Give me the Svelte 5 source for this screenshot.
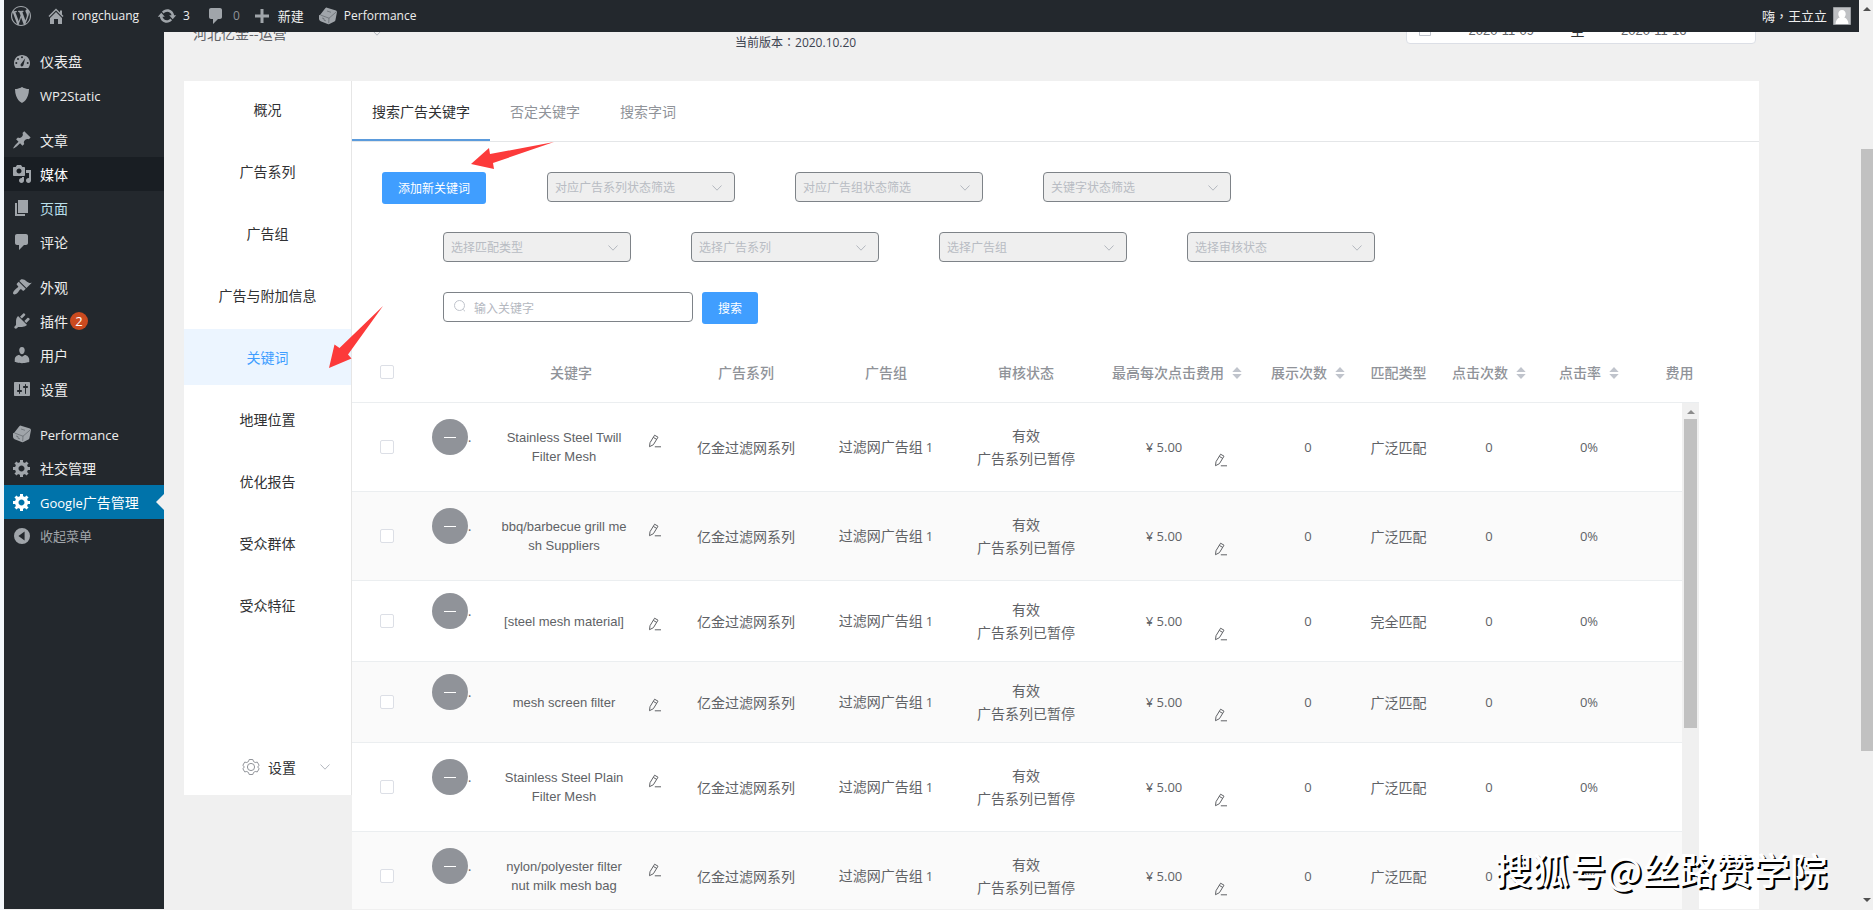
<script>
  const paths = {
    wordpress: 'M20 10c0-5.51-4.49-10-10-10C4.48 0 0 4.49 0 10c0 5.52 4.48 10 10 10 5.51 0 10-4.48 10-10zM7.78 15.37L4.37 6.22c.55-.02 1.17-.08 1.17-.08.5-.06.44-1.13-.06-1.11 0 0-1.45.11-2.37.11-.18 0-.37 0-.58-.01C4.12 2.69 6.87 1.11 10 1.11c2.33 0 4.45.87 6.05 2.34-.68-.11-1.65.39-1.65 1.58 0 .74.45 1.36.9 2.1.35.61.55 1.36.55 2.46 0 1.49-1.4 5-1.4 5l-3.03-8.37c.54-.02.82-.17.82-.17.5-.05.44-1.25-.06-1.22 0 0-1.44.12-2.38.12-.87 0-2.33-.12-2.33-.12-.5-.03-.56 1.2-.06 1.22l.92.08 1.26 3.41zM17.41 10c.24-.64.74-1.87.43-4.25.7 1.29 1.05 2.71 1.05 4.25 0 3.29-1.73 6.24-4.4 7.78.97-2.59 1.94-5.2 2.92-7.78zM6.1 18.09C3.12 16.65 1.11 13.53 1.11 10c0-1.3.23-2.48.72-3.59C3.25 10.3 4.67 14.2 6.1 18.09zm4.03-6.63l2.58 6.98c-.86.29-1.76.45-2.71.45-.79 0-1.57-.11-2.29-.33.81-2.38 1.62-4.74 2.42-7.1z',
    home: 'M16 8.5l1.53 1.53-1.06 1.06L10 4.6l-6.47 6.49-1.06-1.06L10 2.5l4 4v-2h2v4zm-6-2.46l6 5.99V18h-4v-5H8v5H4v-5.97z',
    update: 'M10.2 3.28c3.53 0 6.43 2.61 6.92 6h2.08l-3.5 4-3.5-4h2.32c-.45-1.97-2.21-3.45-4.32-3.45-1.45 0-2.73.71-3.54 1.78L4.95 5.66C6.23 4.2 8.11 3.28 10.2 3.28zm-.4 13.44c-3.52 0-6.43-2.61-6.92-6H.8l3.5-4c1.17 1.33 2.33 2.67 3.5 4H5.48c.45 1.97 2.21 3.45 4.32 3.45 1.45 0 2.73-.71 3.54-1.78l1.71 1.95c-1.28 1.46-3.15 2.38-5.25 2.38z',
    plus: 'M17 8.5v3h-5.500v5.500h-3v-5.500H3v-3h5.500V3h3v5.500z',
    cube: 'M2 9l5.500-7q.5-.6 1.500-.3l9 2.800q1.200.5 1 1.500l-1.600 8.200q-.2.8-1 1.200l-5 2.500q-.9.400-1.800.1l-7-2.800q-1.500-.7-1.600-2.200v-3q0-.5.300-1z',
    dashboard: 'M3.76 17h12.480c1.100-1.370 1.760-3.110 1.760-5 0-4.420-3.580-8-8-8s-8 3.580-8 8c0 1.890.66 3.630 1.760 5zM9 6.200a1 1 0 1 0 2 0a1 1 0 1 0-2 0zM5 8a1 1 0 1 0 2 0a1 1 0 1 0-2 0zM3.300 12a1 1 0 1 0 2 0a1 1 0 1 0-2 0zM14.700 12a1 1 0 1 0 2 0a1 1 0 1 0-2 0zM13.200 7.300l-1.700 6.700c-.3 1-.9 1.500-1.700 1.400-1.100-.2-1.600-1.300-1.100-2.200z',
    shield: 'M10 2s3 2 7 2c0 11-7 14-7 14S3 15 3 4c4 0 7-2 7-2z',
    pin: 'M10.44 3.02l1.82-1.82 6.36 6.35-1.83 1.82c-1.05-.68-2.48-.57-3.41.36l-.75.75c-.92.93-1.04 2.35-.35 3.41l-1.83 1.82-2.41-2.41-2.8 2.79c-.42.42-3.38 2.71-3.8 2.29s1.86-3.39 2.28-3.81l2.79-2.79L4.1 9.36l1.83-1.82c1.05.69 2.48.57 3.4-.36l.75-.75c.93-.92 1.05-2.35.36-3.41z',
    media: 'M13 11V4c0-.55-.45-1-1-1h-1.67L9 1H5L3.67 3H2c-.55 0-1 .45-1 1v7c0 .55.45 1 1 1h10c.55 0 1-.45 1-1zM7 4.5c1.38 0 2.5 1.12 2.5 2.5S8.38 9.5 7 9.5 4.5 8.38 4.5 7 5.62 4.5 7 4.5zM14 6h5v10.5c0 1.38-1.12 2.5-2.5 2.5S14 17.88 14 16.5s1.12-2.5 2.5-2.5c.17 0 .34.02.5.05V9h-3V6zm-4 8.05V13h2v3.5c0 1.38-1.12 2.5-2.5 2.5S7 17.88 7 16.5 8.12 14 9.5 14c.17 0 .34.02.5.05z',
    page: 'M6 15V2h10v13H6zm-1 1h8v2H3V5h2v11z',
    comment: 'M5 2h9c1.1 0 2 .9 2 2v7c0 1.1-.9 2-2 2h-2l-5 5v-5H5c-1.1 0-2-.9-2-2V4c0-1.1.9-2 2-2z',
    brush: 'M14.48 11.06L7.41 3.99l1.5-1.5c.5-.56 2.3-.47 3.51.32 1.21.8 1.43 1.28 2.91 2.1 1.18.64 2.45 1.26 4.45.85zm-.71.71L6.7 4.7 4.93 6.47c-.39.39-.39 1.02 0 1.41l1.06 1.06c.39.39.39 1.03 0 1.42-.6.6-1.43 1.11-2.21 1.69-.35.26-.7.53-1.01.84C1.43 14.23.4 16.08 1.4 17.07c.99 1 2.84-.03 4.18-1.36.31-.31.58-.66.85-1.02.57-.78 1.08-1.61 1.69-2.21.39-.39 1.02-.39 1.41 0l1.06 1.06c.39.39 1.02.39 1.41 0z',
    plugin: 'M13.11 4.36L9.87 7.6 8 5.73l3.24-3.24c.35-.34 1.05-.2 1.56.32.52.51.66 1.21.31 1.55zm-8 1.77l.91-1.12 9.01 9.01-1.19.84c-.71.71-2.63 1.16-3.82 1.16H6.14L4.9 17.26c-.59.59-1.54.59-2.12 0-.59-.58-.59-1.53 0-2.12l1.24-1.24v-3.88c0-1.13.4-3.19 1.09-3.89zm7.26 3.97l3.24-3.24c.34-.35 1.04-.21 1.55.31.52.51.66 1.21.31 1.55l-3.24 3.25z',
    user: 'M10 9.25c-2.27 0-2.73-3.44-2.73-3.44C7 4.02 7.82 2 9.97 2c2.16 0 2.98 2.02 2.71 3.81 0 0-.41 3.44-2.68 3.44zm0 2.57L12.72 10c2.39 0 4.52 2.33 4.52 4.53v2.49s-3.65 1.13-7.24 1.13c-3.65 0-7.24-1.13-7.24-1.13v-2.49c0-2.25 1.94-4.48 4.47-4.48z',
    sliders: 'M18 16V4c0-.55-.45-1-1-1H3c-.55 0-1 .45-1 1v12c0 .55.45 1 1 1h14c.55 0 1-.45 1-1zM8 11h1c.55 0 1 .45 1 1s-.45 1-1 1H8v1.500c0 .28-.22.5-.5.5s-.5-.22-.5-.5V13H6c-.55 0-1-.45-1-1s.45-1 1-1h1V5.500c0-.28.22-.5.5-.5s.5.22.5.5V11zm5-2h-1c-.55 0-1-.45-1-1s.45-1 1-1h1V5.500c0-.28.22-.5.5-.5s.5.22.5.5V7h1c.55 0 1 .45 1 1s-.45 1-1 1h-1v5.500c0 .28-.22.5-.5.5s-.5-.22-.5-.5V9z',
    gear: 'M18 12h-2.18c-.17.7-.44 1.35-.81 1.93l1.54 1.54-2.1 2.1-1.54-1.54c-.58.36-1.23.63-1.91.79V19H8v-2.18c-.68-.16-1.33-.43-1.91-.79l-1.54 1.54-2.12-2.12 1.54-1.54c-.36-.58-.63-1.23-.79-1.91H1V9.03h2.17c.16-.7.44-1.35.8-1.94L2.43 5.55l2.1-2.1 1.54 1.54c.58-.37 1.24-.64 1.93-.81V2h3v2.18c.68.16 1.33.43 1.91.79l1.54-1.54 2.12 2.12-1.54 1.54c.36.59.64 1.24.8 1.94H18V12zm-8.5 1.5c1.66 0 3-1.34 3-3s-1.34-3-3-3-3 1.34-3 3 1.34 3 3 3z',
    collapse: 'M10 2a8 8 0 1 0 0 16a8 8 0 1 0 0-16zM12.600 5.600v8.800L6.400 10z'
  };

  const menu = [
    [
      { icon: 'dashboard', text: '仪表盘' },
      { icon: 'shield', latin: 'WP2Static' }
    ],
    [
      { icon: 'pin', text: '文章' },
      { icon: 'media', text: '媒体', state: 'open' },
      { icon: 'page', text: '页面', state: 'hover' },
      { icon: 'comment', text: '评论' }
    ],
    [
      { icon: 'brush', text: '外观' },
      { icon: 'plugin', text: '插件', badge: 2 },
      { icon: 'user', text: '用户' },
      { icon: 'sliders', text: '设置' }
    ],
    [
      { icon: 'cube', latin: 'Performance' },
      { icon: 'gear', text: '社交管理' },
      { icon: 'gear', latin: 'Google', text: '广告管理', state: 'current' },
      { icon: 'collapse', text: '收起菜单', state: 'muted' }
    ]
  ];

  const sections = ['概况', '广告系列', '广告组', '广告与附加信息', '关键词', '地理位置', '优化报告', '受众群体', '受众特征'];
  const tabs = ['搜索广告关键字', '否定关键字', '搜索字词'];
  const statusFilters = ['对应广告系列状态筛选', '对应广告组状态筛选', '关键字状态筛选'];
  const typeFilters = ['选择匹配类型', '选择广告系列', '选择广告组', '选择审核状态'];

  const rows = [
    { lines: ['Stainless Steel Twill', 'Filter Mesh'], match: '广泛匹配' },
    { lines: ['bbq/barbecue grill me', 'sh Suppliers'], match: '广泛匹配' },
    { lines: ['[steel mesh material]'], match: '完全匹配' },
    { lines: ['mesh screen filter'], match: '广泛匹配' },
    { lines: ['Stainless Steel Plain', 'Filter Mesh'], match: '广泛匹配' },
    { lines: ['nylon/polyester filter', 'nut milk mesh bag'], match: '广泛匹配' }
  ];
</script>

{#snippet icon(name)}
  <svg class="icon" viewBox="0 0 20 20" aria-hidden="true">
    <path fill="currentColor" fill-rule="evenodd" d={paths[name]} />
    {#if name === 'cube'}
      <path d="M2.500 9l8.500 3.200 7.500-6.500M11 12.200l-.3 5M4 12l2 .6v1.600l2 .7M9 5l4 1.300" fill="none" stroke="#23282d" stroke-opacity=".35" stroke-width="1" />
    {/if}
  </svg>
{/snippet}

{#snippet chevron()}
  <svg class="chevron" viewBox="0 0 12 12" aria-hidden="true"><path d="M1.500 3.500L6 8.200l4.500-4.700" fill="none" stroke="currentColor" /></svg>
{/snippet}

{#snippet pencil()}
  <button class="edit" aria-label="编辑">
    <svg viewBox="0 0 14 14" aria-hidden="true">
      <path d="M1.500 12.700L2 8.700 6.600 1.200l3.400 2L5.400 10.700zM5.300 3.400l3.400 2M6.800 12.800h6.200" fill="none" stroke="currentColor" stroke-linejoin="round" />
    </svg>
  </button>
{/snippet}

{#snippet sorter()}
  <svg class="sorter" viewBox="0 0 10 14" aria-hidden="true"><path d="M5 1l4.700 5H.3zM5 13l4.700-5H.3z" fill="#c0c4cc" /></svg>
{/snippet}

{#snippet filter(label)}
  <div class="filter">
    <select disabled aria-label={label}><option>{label}</option></select>
    {@render chevron()}
  </div>
{/snippet}

<div class="page">
  <header class="topbar">
    <a href="#wp" class="wp" aria-label="WordPress">{@render icon('wordpress')}</a>
    <a href="#home" class="home">{@render icon('home')}<span class="latin">rongchuang</span></a>
    <a href="#updates" class="updates">{@render icon('update')}<span class="latin">3</span></a>
    <a href="#comments" class="comments">{@render icon('comment')}<span class="latin dim">0</span></a>
    <a href="#new" class="new">{@render icon('plus')}<span>新建</span></a>
    <a href="#performance">{@render icon('cube')}<span class="latin">Performance</span></a>
    <a href="#profile" class="profile">
      <span>嗨<span class="mark">，</span>王立立</span>
      <svg class="avatar" viewBox="0 0 18 18" aria-hidden="true">
        <path d="M.5.5h17v17H.5z" fill="#bfc1c4" stroke="#9a9da1" />
        <path d="M9 3c2.400 0 3.700 1.700 3.700 4 0 1.500-.7 2.800-1.500 3.600 2.500.8 4 2.800 4.300 6.400h-13c.3-3.600 1.800-5.600 4.300-6.400C6 9.800 5.300 8.500 5.300 7c0-2.300 1.300-4 3.700-4z" fill="#fff" />
      </svg>
    </a>
  </header>

  <div class="body">
    <nav class="menu" aria-label="主菜单">
      {#each menu as group}
        <ul>
          {#each group as item}
            <li>
              <a href="#menu" class={item.state ?? ''}>
                {@render icon(item.icon)}
                <span>{#if item.latin}<span class="latin">{item.latin}</span>{/if}{item.text ?? ''}</span>
                {#if item.badge}<span class="badge latin">{item.badge}</span>{/if}
              </a>
            </li>
          {/each}
        </ul>
      {/each}
    </nav>

    <main>
      <div class="subhead">
        <button class="account"><span>河北亿金--运营</span>{@render chevron()}</button>
        <p>当前版本<span class="mark">：</span><span class="latin">2020.10.20</span></p>
        <div class="dates">
          <svg viewBox="0 0 14 14" aria-hidden="true"><path d="M1.500 2.500h11v10h-11zM1.500 5.500h11M4.500 1v3M9.500 1v3" fill="none" stroke="#c0c4cc" /></svg>
          <input aria-label="开始日期" value="2020-11-09" />
          <span>至</span>
          <input aria-label="结束日期" value="2020-11-16" />
        </div>
      </div>

      <div class="columns">
        <nav class="sections" aria-label="广告管理">
          {#each sections as section}
            <a href="#section" class:active={section === '关键词'}>{section}</a>
          {/each}
          <button class="settings">
            <svg class="cog" viewBox="0 0 18 18" aria-hidden="true">
              <path d="M7.200 1.500h3.600l.7 2 1.700 1 2.100-.4 1.800 3.100-1.400 1.800 1.400 1.800-1.800 3.100-2.100-.4-1.700 1-.7 2H7.200l-.7-2-1.700-1-2.100.4L.9 10.800 2.300 9 .9 7.200l1.800-3.100 2.100.4 1.700-1z" fill="none" stroke="currentColor" stroke-linejoin="round" />
              <circle cx="9" cy="9" r="3.600" fill="none" stroke="currentColor" />
            </svg>
            <span>设置</span>
            {@render chevron()}
          </button>
        </nav>

        <section class="panel">
          <div class="tabs">
            {#each tabs as tab, i}
              <button class:active={i === 0}>{tab}</button>
            {/each}
          </div>

          <div class="filters">
            <div class="line first">
              <button class="primary">添加新关键词</button>
              {#each statusFilters as label}{@render filter(label)}{/each}
            </div>
            <div class="line">
              {#each typeFilters as label}{@render filter(label)}{/each}
            </div>
            <div class="line search">
              <div class="query">
                <svg viewBox="0 0 14 14" aria-hidden="true"><path d="M10.200 10.500l1.800 1.800M6.500 1.500a5 5 0 1 0 0 10a5 5 0 1 0 0-10z" fill="none" stroke="currentColor" /></svg>
                <input aria-label="关键字" placeholder="输入关键字" />
              </div>
              <button class="primary">搜索</button>
            </div>
          </div>

          <div class="grid">
            <table>
              <colgroup>
                <col class="w-check" /><col class="w-state" /><col class="w-name" /><col class="w-edit" />
                <col class="w-series" /><col class="w-series" /><col class="w-series" />
                <col class="w-cost" /><col class="w-count" /><col class="w-match" /><col class="w-count" /><col class="w-count" /><col class="w-match" />
              </colgroup>
              <thead>
                <tr>
                  <th><input type="checkbox" aria-label="全选" /></th>
                  <th></th>
                  <th colspan="2" class="keyword">关键字</th>
                  <th>广告系列</th>
                  <th>广告组</th>
                  <th>审核状态</th>
                  <th>最高每次点击费用{@render sorter()}</th>
                  <th>展示次数{@render sorter()}</th>
                  <th>匹配类型</th>
                  <th>点击次数{@render sorter()}</th>
                  <th>点击率{@render sorter()}</th>
                  <th>费用</th>
                </tr>
              </thead>
              <tbody>
                {#each rows as row}
                  <tr class:tall={row.lines.length > 1}>
                    <td><input type="checkbox" aria-label={row.lines.join(' ')} /></td>
                    <td class="state"><span class="minus"></span><span class="dot">.</span></td>
                    <td class="name">{#each row.lines as line}<div>{line}</div>{/each}</td>
                    <td class="pen">{@render pencil()}</td>
                    <td>亿金过滤网系列</td>
                    <td>过滤网广告组 <span class="latin">1</span></td>
                    <td>有效<br />广告系列已暂停</td>
                    <td><div class="cost"><span class="latin">¥ 5.00</span>{@render pencil()}</div></td>
                    <td class="latin">0</td>
                    <td>{row.match}</td>
                    <td class="latin">0</td>
                    <td class="latin">0%</td>
                    <td></td>
                  </tr>
                {/each}
              </tbody>
            </table>
            <div class="scroll"><i class="up"></i><i class="thumb"></i></div>
          </div>
        </section>
      </div>
    </main>
  </div>

  <div class="pagescroll"><i class="up"></i><i class="thumb"></i><i class="down"></i></div>

  <svg class="pointer add" viewBox="0 0 85 29" aria-hidden="true"><path d="M1 23L19 7l1 6L84 1 23 22l1 6z" fill="#fc3a3a" /></svg>
  <svg class="pointer nav" viewBox="0 0 56 64" aria-hidden="true"><path d="M1 63L6.500 39.500l5 3.500L55 1 20 49.500l3.500 4z" fill="#fc3a3a" /></svg>
  <div class="watermark">搜狐号@丝路赞学院</div>
</div>

<style>
  :global(body) {
    margin: 0;
    background: #f0f0f0;
    overflow: hidden;
  }
  .page {
    position: relative;
    height: 100vh;
    box-sizing: border-box;
    display: flex;
    flex-direction: column;
    padding: 0 14px 1px 4px;
    overflow: hidden;
    background: linear-gradient(90deg, #f3f7fb 4px, #f0f0f0 4px);
    font: 14px/20px "Noto Sans CJK SC", sans-serif;
    color: #303133;
  }
  .latin { font-family: "Open Sans", "Noto Sans CJK SC", sans-serif; font-size: 13px; }
  .mark { font-family: "Noto Sans CJK TC", sans-serif; }
  a { color: inherit; text-decoration: none; }
  button { font: inherit; color: inherit; border: 0; background: none; padding: 0; cursor: pointer; }
  .icon { width: 20px; height: 20px; flex: none; color: #a0a5aa; }
  .chevron { width: 12px; height: 12px; flex: none; color: #b4b8bf; }

  .topbar {
    position: relative;
    z-index: 2;
    flex: none;
    display: flex;
    height: 32px;
    padding: 0 8px 0 7px;
    background: #23282d;
    color: #eee;
    font-size: 13px;
  }
  .topbar a { display: flex; align-items: center; gap: 6px; }
  .topbar .latin { font-size: 12px; }
  .topbar .dim { color: #8f9499; }
  .wp { margin-right: 15px; }
  .home { margin-right: 18px; }
  .updates { margin-right: 16px; }
  .comments { margin-right: 12px; }
  .comments .latin { margin-left: 1px; }
  .new { margin-right: 14px; }
  .topbar .profile { margin-left: auto; }
  .avatar { width: 18px; height: 18px; }

  .body { flex: 1; min-height: 0; display: flex; }
  .menu {
    flex: none;
    width: 160px;
    padding-top: 12px;
    background: #23282d;
    color: #eee;
  }
  .menu ul { list-style: none; margin: 0 0 11px; padding: 0; }
  .menu a { position: relative; display: flex; align-items: center; gap: 8px; height: 34px; padding-left: 8px; }
  .menu .open { background: #191e23; color: #fff; }
  .menu .hover { color: #b9dfea; }
  .menu .muted { color: #a0a5aa; font-size: 13px; }
  .menu .current { background: #0073aa; color: #fff; }
  .menu .current .icon { color: #fff; }
  .menu .current::after {
    content: "";
    position: absolute;
    right: 0;
    top: 9px;
    border: 8px solid transparent;
    border-left: 0;
    border-right-color: #f0f0f0;
  }
  .menu .badge {
    width: 18px;
    height: 18px;
    margin-left: -6px;
    border-radius: 9px;
    background: #ca4a1f;
    color: #fff;
    line-height: 18px;
    text-align: center;
  }

  main { flex: 1; min-width: 0; display: flex; flex-direction: column; padding: 0 100px 0 20px; }
  .subhead { flex: none; display: grid; grid-template-columns: 551px 1fr 350px; height: 49px; padding-right: 3px; align-items: start; }
  .account { display: flex; align-items: center; justify-content: space-between; width: 207px; height: 22px; margin-top: -10px; padding: 0 8px 0 9px; color: #606266; }
  .subhead p { margin: 0; font-size: 12px; color: #3c4350; }
  .subhead p .latin { font-size: 12px; }
  .dates {
    display: flex;
    align-items: center;
    height: 28px;
    margin-top: -16px;
    padding: 0 32px 0 11px;
    border: 1px solid #dcdfe6;
    border-radius: 4px;
    background: #fff;
    box-sizing: border-box;
  }
  .dates svg { width: 14px; height: 14px; }
  .dates input { flex: 1; min-width: 0; padding: 0; border: 0; background: none; text-align: center; font: 13px "Liberation Sans", sans-serif; color: #606266; }

  .columns { flex: 1; min-height: 0; display: flex; align-items: flex-start; }
  .sections { flex: none; width: 167px; height: 714px; display: flex; flex-direction: column; gap: 6px; background: #fff; border-right: 1px solid #e6e6e6; }
  .sections a { line-height: 56px; text-align: center; }
  .sections .active { background: #ecf5ff; color: #409eff; }
  .settings { display: flex; align-items: center; height: 56px; margin-top: auto; padding: 0 20px 0 58px; gap: 8px; }
  .settings .cog { width: 18px; height: 18px; color: #909399; }
  .settings .chevron { margin-left: auto; }

  .panel { flex: 1; min-width: 0; align-self: stretch; display: flex; flex-direction: column; background: #fff; overflow: hidden; }
  .tabs { flex: none; display: flex; height: 60px; border-bottom: 1px solid #e4e6e8; }
  .tabs button { padding: 2px 20px 0; color: #909399; border-bottom: 2px solid transparent; }
  .tabs .active { color: #303133; border-bottom-color: #5b9bdc; }

  .filters { flex: none; display: flex; flex-direction: column; padding: 30px 30px 0; font-size: 12px; }
  .line { display: flex; align-items: flex-start; gap: 60px; height: 60px; padding-left: 61px; }
  .line.first { padding-left: 0; }
  .line.first .primary { margin-right: 1px; }
  .line.search { gap: 9px; height: 50px; }
  .primary { height: 32px; padding: 0 16px; border-radius: 3px; background: #409eff; color: #fff; }
  .filter { position: relative; width: 188px; }
  .filter select {
    appearance: none;
    width: 100%;
    height: 30px;
    padding: 0 30px 0 7px;
    border: 1px solid #7e8388;
    border-radius: 4px;
    background: #efefef;
    color: #b8bcc3;
    opacity: 1;
    font: inherit;
  }
  .filter .chevron { position: absolute; right: 12px; top: 10px; }
  .query { position: relative; width: 250px; color: #c0c4cc; }
  .query svg { position: absolute; left: 10px; top: 7px; width: 14px; height: 14px; }
  .query input { width: 100%; height: 30px; box-sizing: border-box; padding: 0 8px 0 30px; border: 1px solid #7e8388; border-radius: 4px; background: #fff; font: inherit; }
  .query input::placeholder { color: #b4b8bf; opacity: 1; }

  .grid { position: relative; flex: 1; min-height: 0; margin-right: 60px; overflow: hidden; }
  table { width: 1367px; table-layout: fixed; border-collapse: separate; border-spacing: 0; }
  .w-check { width: 70px; }
  .w-state { width: 58px; }
  .w-name { width: 168px; }
  .w-edit { width: 28px; }
  .w-series { width: 140px; }
  .w-cost { width: 162px; }
  .w-count { width: 100px; }
  .w-match { width: 81px; }
  th, td { padding: 0; border-bottom: 1px solid #ebeef0; text-align: center; vertical-align: middle; white-space: nowrap; box-sizing: border-box; }
  th { height: 61px; color: #909399; font-weight: 500; }
  th.keyword { padding-right: 14px; }
  td { height: 81px; color: #606266; line-height: 23px; }
  .tall td { height: 89px; }
  tbody tr:nth-child(even) td { background: #fafafa; }
  .sorter { width: 10px; height: 14px; margin-left: 8px; vertical-align: -2px; }
  input[type="checkbox"] { appearance: none; display: block; width: 14px; height: 14px; margin: 0 auto; border: 1px solid #dcdfe6; border-radius: 2px; background: #fff; }
  td.state { padding: 0 0 20px 10px; text-align: left; line-height: 36px; font-size: 0; }
  .minus { display: inline-flex; align-items: center; justify-content: center; width: 36px; height: 36px; border-radius: 18px; background: #909399; vertical-align: middle; }
  .minus::before { content: ""; width: 12px; height: 1px; background: #fff; }
  .dot { font-size: 12px; vertical-align: middle; }
  .name { font: 13px/19px "Liberation Sans", sans-serif; }
  .edit { display: block; width: 14px; height: 14px; color: #606266; }
  .edit svg { display: block; width: 14px; height: 14px; }
  td.pen { padding: 6px 0 0; }
  .tall td.pen { padding: 0 0 12px; }
  .cost { display: grid; grid-template-columns: 100px 14px; padding-left: 18px; align-items: center; }
  .cost .edit { margin-top: 26px; }

  .scroll { position: absolute; right: 0; top: 61px; bottom: 0; width: 17px; background: #f0f0f0; display: flex; flex-direction: column; align-items: center; }
  .up, .down { width: 0; height: 0; border: 4px solid transparent; }
  .up { border-top: 0; border-bottom-color: #8c8c8c; margin-top: 7px; }
  .down { border-bottom: 0; border-top-color: #505050; }
  .scroll .thumb { width: 13px; height: 309px; margin-top: 5px; background: #c1c1c1; }
  .pagescroll { position: absolute; right: 0; top: 0; bottom: 1px; width: 12px; display: flex; flex-direction: column; align-items: center; background: #f0f0f0; }
  .pagescroll .thumb { width: 12px; flex: 0 0 602px; margin-top: 138px; background: #c1c1c1; }
  .pagescroll .up { border-bottom-color: #505050; }
  .pagescroll .down { margin-top: auto; margin-bottom: 7px; }

  .pointer { position: absolute; z-index: 3; }
  .pointer.add { left: 470px; top: 141px; width: 85px; height: 29px; }
  .pointer.nav { left: 328px; top: 305px; width: 56px; height: 64px; }
  .watermark {
    position: absolute;
    z-index: 3;
    right: 46px;
    bottom: 19px;
    font-size: 37px;
    font-weight: 500;
    line-height: 44px;
    color: #fff;
    text-shadow: 2px 2px 0 #000;
  }
</style>
